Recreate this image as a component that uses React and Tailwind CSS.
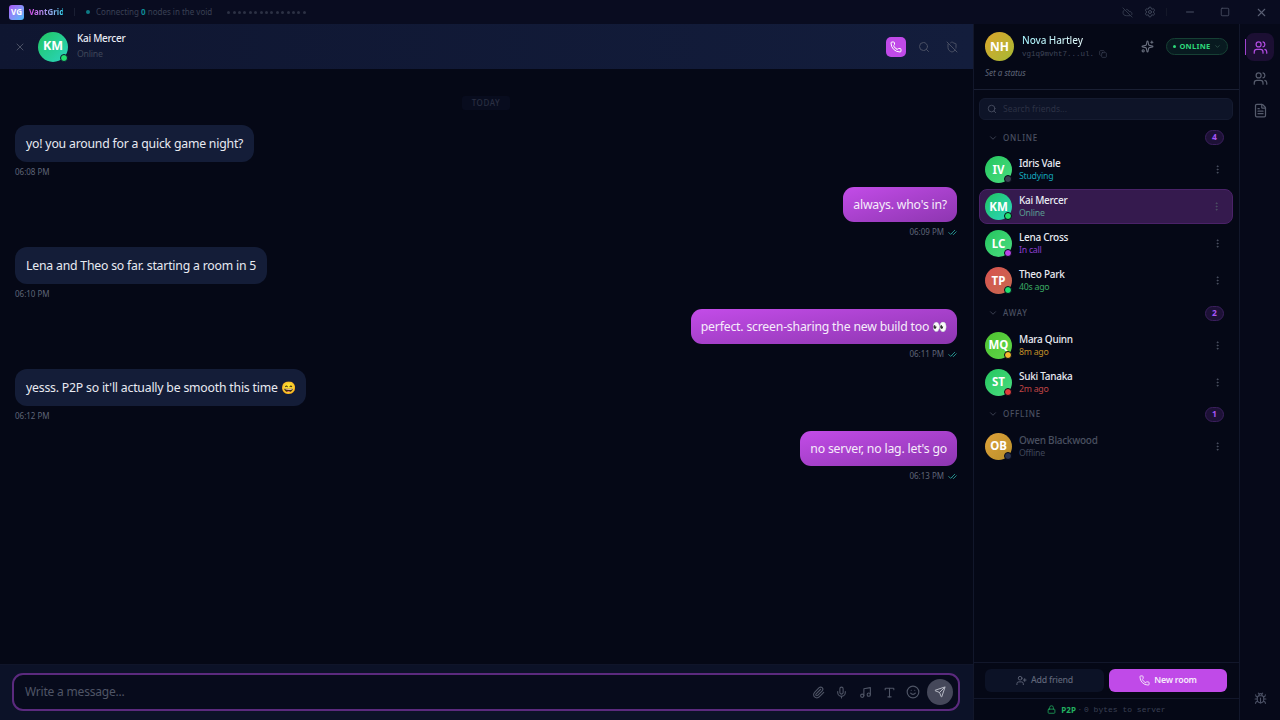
import React from "react";
import { X, Phone, Search, ShieldOff, Copy, Sparkles, ChevronDown, EllipsisVertical, Users, FileText, Bug, UserPlus, Lock, Paperclip, Mic, Music, Type, Smile, Send, CheckCheck, Settings, Minus, Square, CloudOff } from "lucide-react";

const msgs = [
  { me: false, t: "yo! you around for a quick game night?", time: "06:08 PM" },
  { me: true, t: "always. who's in?", time: "06:09 PM" },
  { me: false, t: "Lena and Theo so far. starting a room in 5", time: "06:10 PM" },
  { me: true, t: "perfect. screen-sharing the new build too 👀", time: "06:11 PM" },
  { me: false, t: "yesss. P2P so it'll actually be smooth this time 😄", time: "06:12 PM" },
  { me: true, t: "no server, no lag. let's go", time: "06:13 PM" },
];

function Friend({ i, name, sub, subC, grad, dot, active, off }) {
  return (
    <div className={`h-[35px] mb-[2px] mx-[5px] w-[254px] pr-[10px] flex items-center gap-[7px] rounded-lg ${active ? "bg-[#351a4e] border border-[#4a2268] pl-[5px]" : "pl-[6px]"}`}>
      <div className={`relative w-[27px] h-[27px] shrink-0 rounded-full flex items-center justify-center text-[11.5px] font-bold text-white ${grad}`}>
        {i}
        <span className={`absolute right-0 bottom-0 w-[6px] h-[6px] rounded-full border-[1.5px] border-[#050816] box-content ${dot}`} />
      </div>
      <div className="flex-1 min-w-0 pt-[1px]">
        <div className={`text-[10px] tracking-[-0.28px] leading-[13px] font-medium ${off ? "text-[#4a5060]" : "text-[#e8eaf2]"}`}>{name}</div>
        <div className={`text-[8.75px] tracking-[-0.25px] leading-[13px] ${subC}`}>{sub}</div>
      </div>
      <EllipsisVertical size={11} className="text-[#4f5566]" />
    </div>
  );
}

function Section({ label, n, children, mt }) {
  return (
    <div className={mt}>
      <div className="h-[19px] mb-[5px] flex items-center pl-[14px] pr-[14px] w-[264px]">
        <ChevronDown size={10} className="text-[#454b5c]" />
        <span className="ml-[5px] text-[8px] tracking-[0.8px] font-medium text-[#4b5162] flex-1">{label}</span>
        <span className="w-[19px] h-[15px] rounded-full bg-[#1d1136] border border-[#3a1f5c] flex items-center justify-center text-[8.5px] font-bold text-[#a855f7]">{n}</span>
      </div>
      {children}
    </div>
  );
}

export default function App() {
  return (
    <div className="w-[1280px] h-[720px] overflow-hidden flex flex-col bg-[#050816] text-white font-['Noto_Sans',sans-serif]">
      {/* title bar */}
      <div className="h-[24px] shrink-0 flex items-center bg-[#090c20] pl-[9px] pr-[12px]">
        <div className="w-[15px] h-[15px] rounded-[3px] bg-gradient-to-br from-[#a855f7] to-[#38bdf8] flex items-center justify-center text-[8px] font-bold">VG</div>
        <span className="ml-[5px] w-[34px] whitespace-nowrap text-[8px] font-bold bg-gradient-to-r from-[#d946ef] to-[#22d3ee] bg-clip-text text-transparent">VantGrid</span>
        <span className="ml-[11px] w-px h-[8px] bg-[#1a1f33]" />
        <span className="ml-[11px] w-[4px] h-[4px] rounded-full bg-[#0e7c86]" />
        <span className="ml-[6px] text-[8px] text-[#3a4054]">Connecting <b className="text-[#0e8a96]">0</b> nodes in the void</span>
        <div className="ml-[15px] flex gap-[2.4px]">
          {Array.from({ length: 15 }, (_, k) => <span key={k} className="w-[3px] h-[3px] rounded-full bg-[#2c3144]" />)}
        </div>
        <div className="flex-1" />
        <CloudOff size={11} className="text-[#333a4d]" />
        <Settings size={12} className="ml-[11px] text-[#3f4659]" />
        <span className="ml-[10px] w-px h-[8px] bg-[#141829]" />
        <Minus size={12} className="ml-[17px] text-[#4a5064]" />
        <Square size={10} className="ml-[24px] text-[#4a5064]" />
        <X size={13} className="ml-[25px] text-[#5a6074]" />
      </div>

      <div className="flex-1 flex min-h-0">
        {/* chat */}
        <div className="w-[973px] shrink-0 flex flex-col border-r border-[#12172b] box-content">
          <div className="h-[45px] shrink-0 flex items-center bg-gradient-to-r from-[#0f1631] to-[#131d3c] pl-[14px] pr-[15px]">
            <X size={12} className="text-[#4a5064]" />
            <div className="ml-[12px] relative w-[30px] h-[30px] rounded-full bg-gradient-to-br from-[#22c55e] to-[#2dd4bf] flex items-center justify-center text-[12.5px] font-bold">
              KM
              <span className="absolute right-0 bottom-0 w-[6px] h-[6px] box-content rounded-full bg-[#22e06f] border-[1.5px] border-[#0f1631]" />
            </div>
            <div className="ml-[9px] -mt-[3px]">
              <div className="text-[10px] tracking-[-0.28px] leading-[14px] font-medium text-[#e8eaf2]">Kai Mercer</div>
              <div className="text-[8.75px] tracking-[-0.25px] leading-[12px] mt-[3px] text-[#3f4659]">Online</div>
            </div>
            <div className="flex-1" />
            <div className="w-[20px] h-[20px] rounded-[5px] bg-[#c04ae8] flex items-center justify-center"><Phone size={12} className="text-white" /></div>
            <Search size={12} className="ml-[12px] text-[#4a5064]" />
            <ShieldOff size={12} className="ml-[16px] text-[#4a5064]" />
          </div>

          <div className="flex-1 flex flex-col pl-[15px] pr-[16px] pt-[27px] min-h-0">
            <div className="self-center h-[14px] px-[10px] rounded-[3px] bg-[#080c1e] flex items-center text-[8px] tracking-[0.6px] font-medium text-[#2a2f42] mb-[15px]">TODAY</div>
            {msgs.map((m, k) => (
              <div key={k} className={`flex flex-col mb-[7px] ${m.me ? "items-end" : "items-start"}`}>
                {m.me ? (
                  <div className="h-[35px] pt-[2px] flex items-center px-[10px] rounded-[11px] bg-gradient-to-br from-[#c34ce8] to-[#8d36b0] text-[12.25px] tracking-[-0.2px] text-[#f6ecfb]">{m.t}</div>
                ) : (
                  <div className="h-[37px] pt-[2px] flex items-center px-[11px] rounded-[12px] bg-[#141d38] text-[12.25px] tracking-[-0.2px] text-[#e8eaf2]">{m.t}</div>
                )}
                <div className="h-[16px] mt-[2px] flex items-center gap-[4px] text-[8px] text-[#5f6578]">
                  {m.time}
                  {m.me && <CheckCheck size={9} className="text-[#2fb5ae]" />}
                </div>
              </div>
            ))}
          </div>

          <div className="h-[56px] shrink-0 border-t border-[#10152a] bg-[#0c1228] pl-[12px] pr-[13px] pt-[8px]">
            <div className="h-[38px] rounded-[11px] border-2 border-[#5b2a7e] bg-[#070b1c] flex items-center pl-[11px] pr-[5px]">
              <span className="text-[12px] tracking-[-0.2px] text-[#4f5566] flex-1">Write a message...</span>
              <Paperclip size={13} className="text-[#4f5566]" />
              <Mic size={13} className="ml-[10px] text-[#4f5566]" />
              <Music size={13} className="ml-[11px] text-[#4f5566]" />
              <Type size={13} className="ml-[11px] text-[#4f5566]" />
              <Smile size={14} className="ml-[10px] text-[#4f5566]" />
              <div className="ml-[7px] w-[26px] h-[26px] rounded-full bg-[#45485a] flex items-center justify-center"><Send size={12} className="text-[#b6b9c4]" /></div>
            </div>
          </div>
        </div>

        {/* friends */}
        <div className="w-[265px] shrink-0 flex flex-col border-r border-[#12172b] box-content">
          <div className="h-[66px] shrink-0 border-b border-[#1a1f33] pl-[11px] pr-[11px] pt-[8px]">
            <div className="flex items-center">
              <div className="w-[29px] h-[29px] rounded-full bg-gradient-to-br from-[#dca52c] to-[#a3b834] flex items-center justify-center text-[12px] font-bold">NH</div>
              <div className="ml-[8px] -mt-[2px]">
                <div className="text-[10px] tracking-[-0.1px] leading-[14px] font-medium bg-gradient-to-r from-[#a5f3fc] to-[#f5f5f5] bg-clip-text text-transparent">Nova Hartley</div>
                <div className="flex items-center text-[7.5px] mt-[2px] leading-[10px] text-[#3f4659] font-['Liberation_Mono',monospace]">vg1q9mvht7...ul.<Copy size={8} className="ml-[5px]" /></div>
              </div>
              <div className="flex-1" />
              <Sparkles size={13} className="text-[#6b7180] mr-[12px]" />
              <div className="w-[62px] h-[17px] rounded-full border border-[#164034] bg-[#081a20] flex items-center justify-center text-[7.5px] font-bold tracking-[0.3px] text-[#2dd87a]">
                <span className="w-[3px] h-[3px] rounded-full bg-[#2dd87a] mr-[3px]" />ONLINE<ChevronDown size={7} className="ml-[3px] text-[#3f6a5c]" />
              </div>
            </div>
            <div className="text-[8px] italic text-[#5f6578] mt-[6px]">Set a status</div>
          </div>

          <div className="px-[5px] pt-[8px] pb-[8px] w-[264px]">
            <div className="h-[22px] rounded-[6px] bg-[#0e1428] border border-[#151b30] flex items-center pl-[7px]">
              <Search size={10} className="text-[#4a5064]" />
              <span className="ml-[6px] text-[8.5px] text-[#2c3144]">Search friends...</span>
            </div>
          </div>

          <div className="flex-1 min-h-0">
            <Section label="ONLINE" n="4">
              <Friend i="IV" name="Idris Vale" sub="Studying" subC="text-[#14a3b8]" grad="bg-gradient-to-br from-[#22c55e] to-[#4ade80]" dot="bg-[#3a3f52]" />
              <Friend i="KM" name="Kai Mercer" sub="Online" subC="text-[#5a9a90]" grad="bg-gradient-to-br from-[#22c55e] to-[#2dd4bf]" dot="bg-[#22e06f]" active />
              <Friend i="LC" name="Lena Cross" sub="In call" subC="text-[#8e3fd0]" grad="bg-gradient-to-br from-[#22c55e] to-[#4ade80]" dot="bg-[#b944e8]" />
              <Friend i="TP" name="Theo Park" sub="40s ago" subC="text-[#3aa862]" grad="bg-gradient-to-br from-[#d8504f] to-[#c76a50]" dot="bg-[#22e06f]" />
            </Section>
            <Section label="AWAY" n="2" mt="mt-[5.5px]">
              <Friend i="MQ" name="Mara Quinn" sub="8m ago" subC="text-[#c08e28]" grad="bg-gradient-to-br from-[#4ec22e] to-[#5fd84a]" dot="bg-[#f5b82e]" />
              <Friend i="ST" name="Suki Tanaka" sub="2m ago" subC="text-[#c04545]" grad="bg-gradient-to-br from-[#22c55e] to-[#4ade80]" dot="bg-[#e03c3c]" />
            </Section>
            <Section label="OFFLINE" n="1" mt="mt-[5px]">
              <Friend i="OB" name="Owen Blackwood" sub="Offline" subC="text-[#3f4659]" grad="bg-gradient-to-br from-[#e0a23a] to-[#b88f2a]" dot="bg-[#2c3550]" off />
            </Section>
          </div>

          <div className="h-[36px] shrink-0 border-t border-[#12172b] flex items-start pl-[11px] gap-[5px] pt-[6px]">
            <div className="w-[119px] h-[23px] rounded-[6px] bg-[#0c1226] flex items-center justify-center text-[8.75px] tracking-[-0.2px] font-medium text-[#5f6578]"><UserPlus size={11} className="mr-[4px]" />Add friend</div>
            <div className="w-[118px] h-[23px] rounded-[6px] bg-[#c04ae8] flex items-center justify-center text-[8.75px] tracking-[-0.2px] font-semibold text-[#f6ecfb]"><Phone size={11} className="mr-[4px]" />New room</div>
          </div>
          <div className="h-[22px] shrink-0 border-t border-[#12172b] flex items-center justify-center text-[8px] text-[#3a4054]">
            <Lock size={9} className="text-[#22b060] mr-[5px]" />
            <b className="text-[#22b060] mr-[3px]">P2P</b> · <span className="ml-[3px] font-['Liberation_Mono',monospace]">0 bytes to server</span>
          </div>
        </div>

        {/* rail */}
        <div className="flex-1 flex flex-col items-center pt-[9px] pb-[15px] bg-[#060919]">
          <div className="relative w-[28px] h-[28px] rounded-[8px] bg-[#1c0f33] flex items-center justify-center">
            <span className="absolute left-[-1px] top-[6px] w-[1px] h-[16px] bg-[#a044d0]" />
            <Users size={15} className="text-[#b14ce0]" />
          </div>
          <Users size={15} className="mt-[10px] text-[#555b6c]" />
          <FileText size={15} className="mt-[17px] text-[#555b6c]" />
          <div className="flex-1" />
          <Bug size={13} className="text-[#4a5064]" />
        </div>
      </div>
    </div>
  );
}
